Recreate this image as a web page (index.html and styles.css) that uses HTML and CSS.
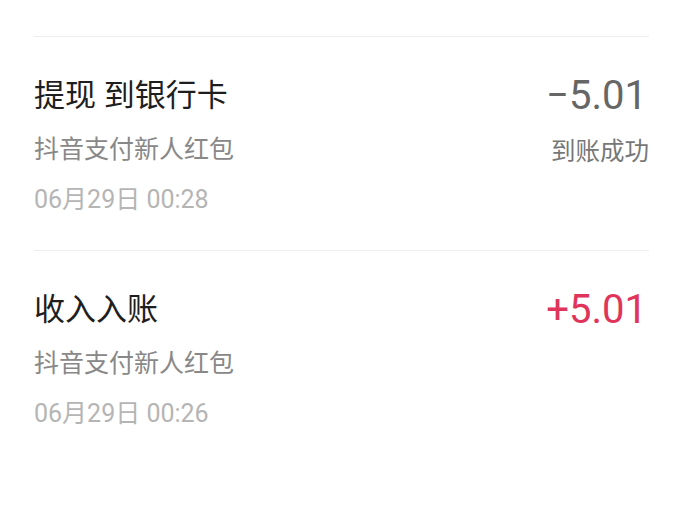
FILE: index.html
```html
<!DOCTYPE html>
<html lang="zh-CN">
<head>
<meta charset="utf-8">
<link rel="stylesheet" href="styles.css">
</head>
<body>
<div class="list">
  <div class="row">
    <div class="left">
      <div class="title">提现 到银行卡</div>
      <div class="sub">抖音支付新人红包</div>
      <div class="date">06月29日 00:28</div>
    </div>
    <div class="right">
      <div class="amount neg">−5.01</div>
      <div class="status">到账成功</div>
    </div>
  </div>
  <div class="row">
    <div class="left">
      <div class="title">收入入账</div>
      <div class="sub">抖音支付新人红包</div>
      <div class="date">06月29日 00:26</div>
    </div>
    <div class="right">
      <div class="amount pos">+5.01</div>
    </div>
  </div>
</div>
</body>
</html>
```

FILE: styles.css
```css
html, body {
  margin: 0;
  padding: 0;
  background: #fff;
}
body {
  font-family: Roboto, "Noto Sans CJK SC", sans-serif;
  width: 683px;
  height: 514px;
  overflow: hidden;
}
.list {
  padding: 36px 34px 0 34px;
}
.row {
  display: flex;
  justify-content: space-between;
  align-items: flex-start;
  border-top: 1px solid #eeeeee;
  padding: 39px 0 34px 0;
}
.left, .right {
  display: flex;
  flex-direction: column;
}
.right {
  align-items: flex-end;
}
.title {
  font-size: 31px;
  line-height: 40px;
  color: #1e1e1e;
}
.sub {
  font-size: 25px;
  line-height: 34px;
  margin-top: 17px;
  color: #888888;
}
.date {
  font-size: 25px;
  line-height: 32px;
  margin-top: 17px;
  color: #b5b5b5;
}
.amount {
  font-size: 40px;
  line-height: 40px;
  margin-right: 2px;
}
.neg { color: #666666; }
.pos { color: #e0345b; }
.status {
  font-size: 24.5px;
  line-height: 34px;
  margin-top: 19px;
  color: #777777;
}
```
